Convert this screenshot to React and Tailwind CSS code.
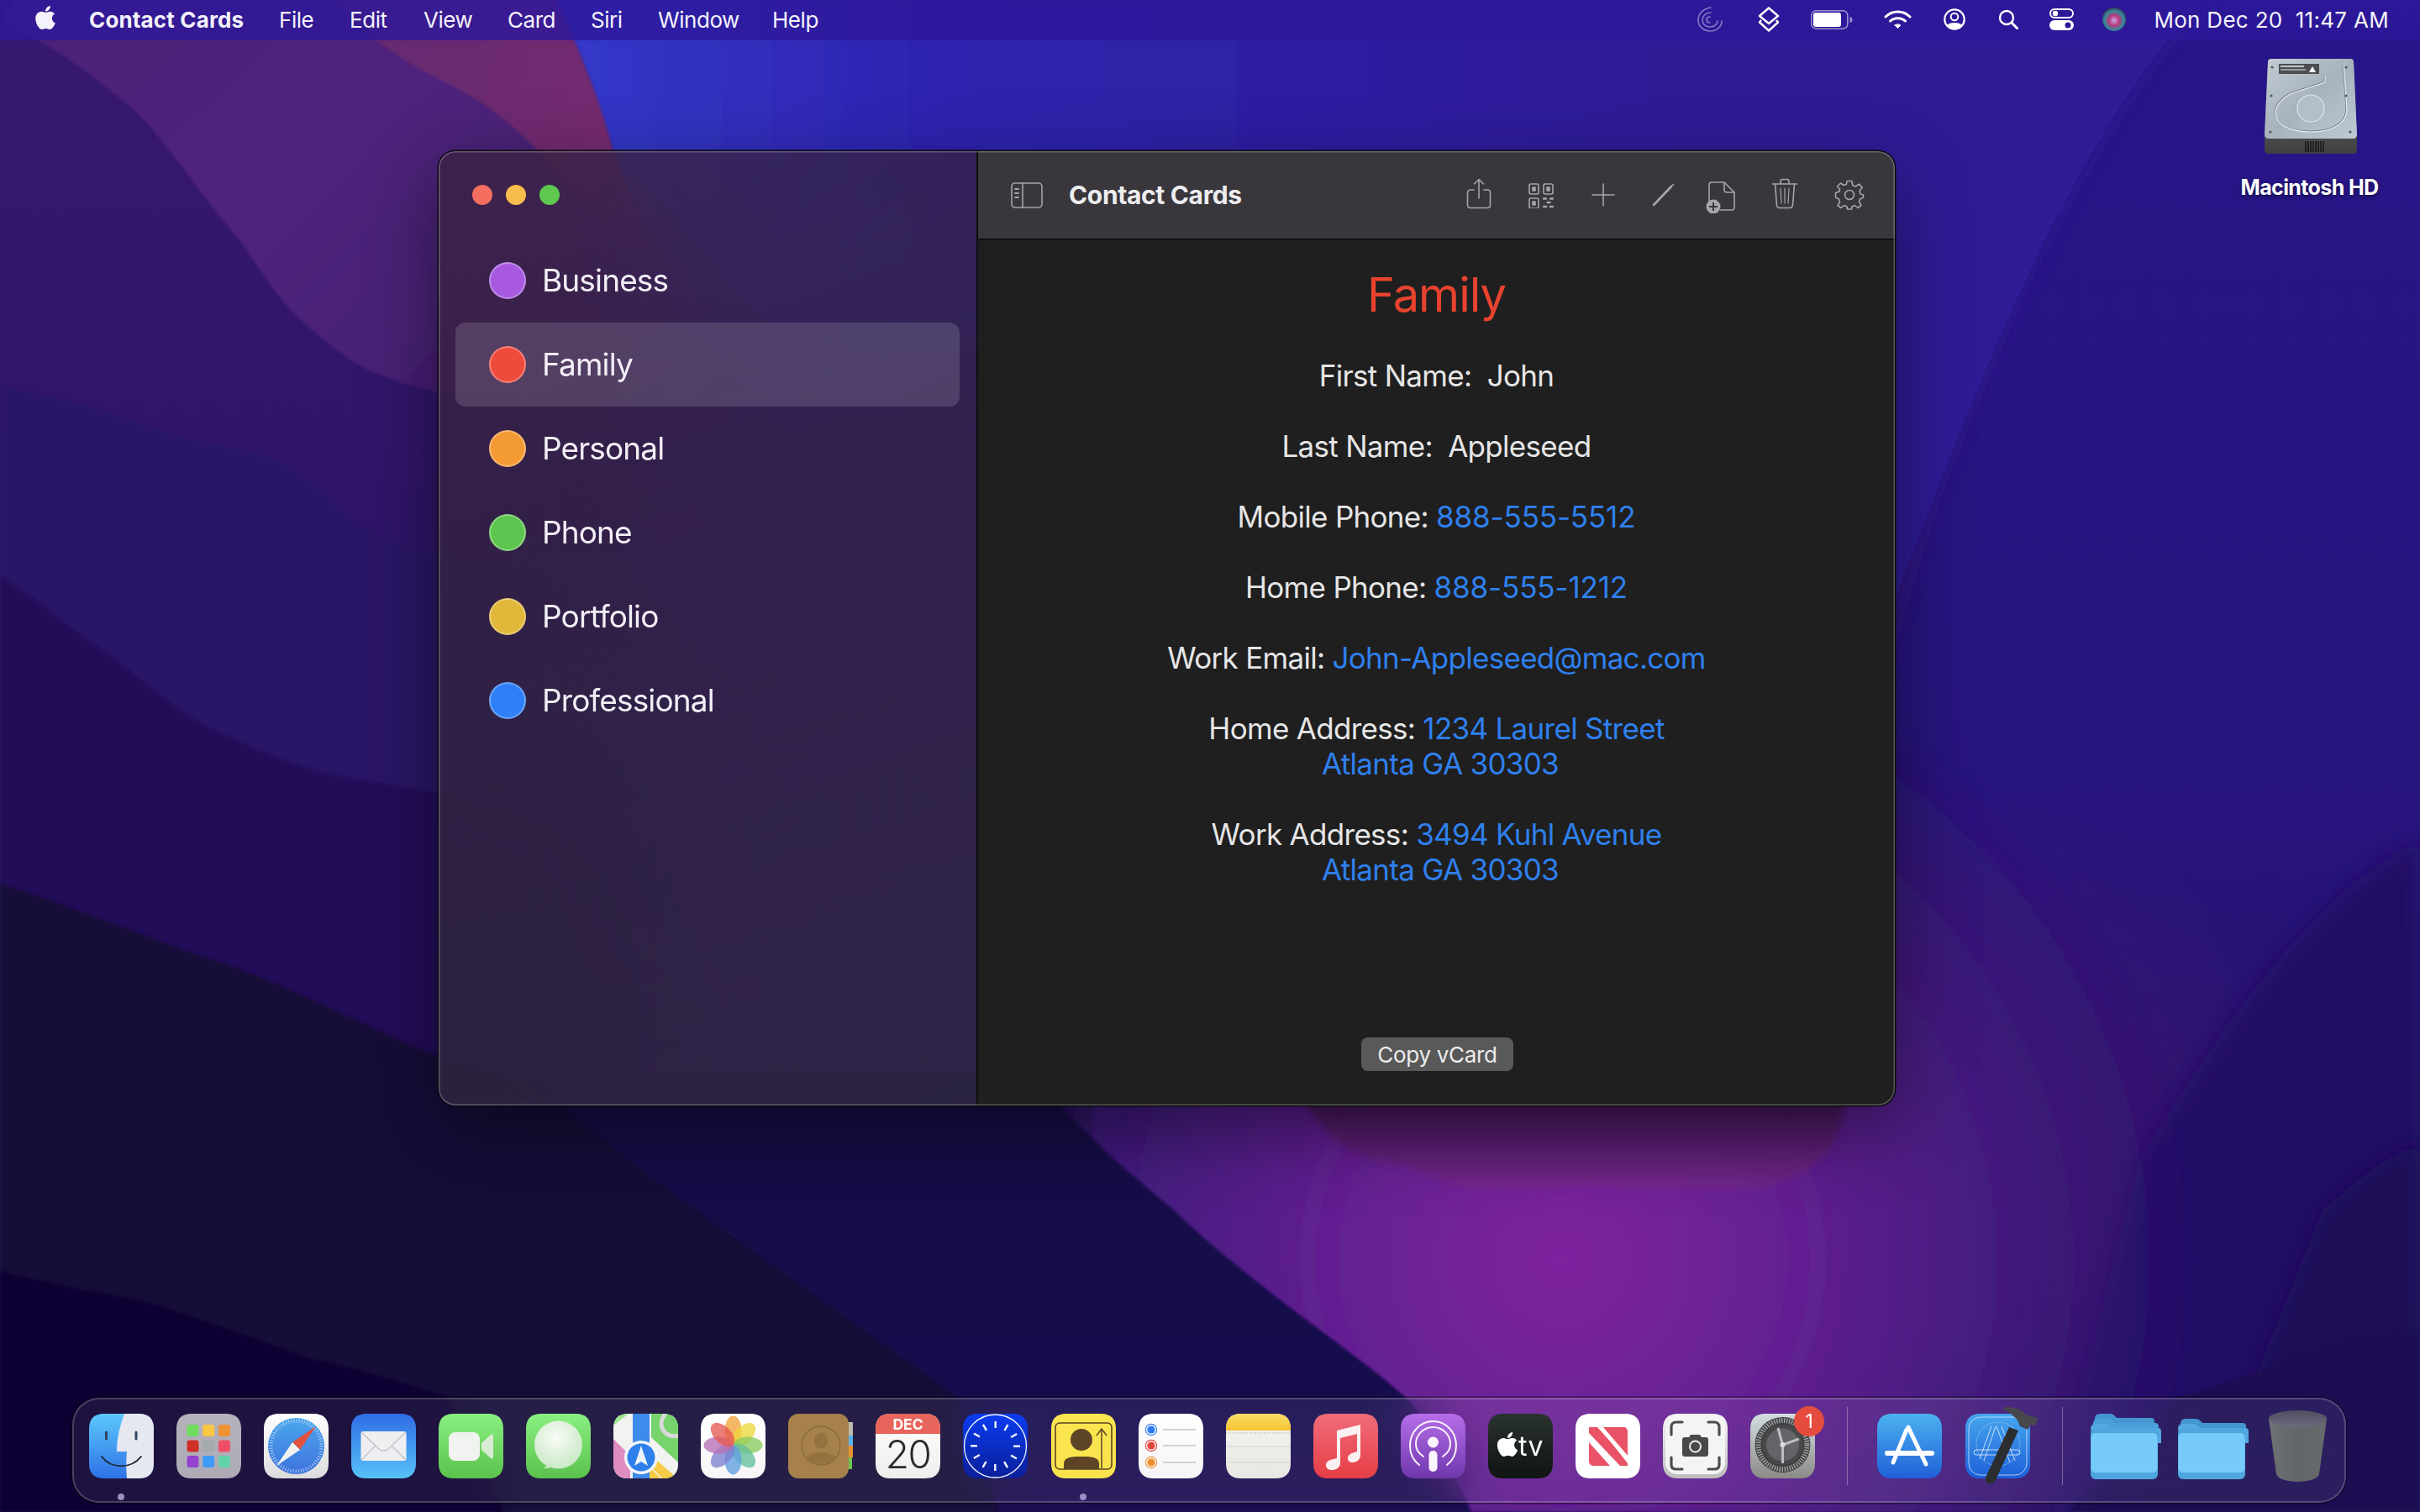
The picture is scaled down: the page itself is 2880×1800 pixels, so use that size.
import React from "react";
import { FaApple } from "react-icons/fa";

function Wallpaper() {
  return (
    <svg className="absolute inset-0 w-full h-full" viewBox="0 0 2880 1800" preserveAspectRatio="none">
      <defs>
        <linearGradient id="wbase" x1="0" y1="0" x2="0" y2="1">
          <stop offset="0" stopColor="#27168a" /><stop offset="0.55" stopColor="#28147c" /><stop offset="0.75" stopColor="#241168" /><stop offset="1" stopColor="#1b0c50" />
        </linearGradient>
        <linearGradient id="wmid" gradientUnits="userSpaceOnUse" x1="0" y1="0" x2="0" y2="1400">
          <stop offset="0" stopColor="#2e1b94" /><stop offset="0.6" stopColor="#31167f" /><stop offset="1" stopColor="#431a7a" />
        </linearGradient>
        <linearGradient id="wblue" gradientUnits="userSpaceOnUse" x1="660" y1="0" x2="2000" y2="0">
          <stop offset="0" stopColor="#3439ca" /><stop offset="0.35" stopColor="#2d22ae" /><stop offset="1" stopColor="#2d1b96" />
        </linearGradient>
        <linearGradient id="wleft" gradientUnits="userSpaceOnUse" x1="0" y1="48" x2="0" y2="700">
          <stop offset="0" stopColor="#371870" /><stop offset="1" stopColor="#2e1468" />
        </linearGradient>
        <linearGradient id="wl1" gradientUnits="userSpaceOnUse" x1="100" y1="50" x2="500" y2="450">
          <stop offset="0" stopColor="#4c2078" /><stop offset="0.5" stopColor="#50247c" /><stop offset="1" stopColor="#461f74" />
        </linearGradient>
        <linearGradient id="wmag" gradientUnits="userSpaceOnUse" x1="450" y1="60" x2="720" y2="140">
          <stop offset="0" stopColor="#652970" /><stop offset="1" stopColor="#742a70" />
        </linearGradient>
        <radialGradient id="wglow" gradientUnits="userSpaceOnUse" cx="1860" cy="1500" r="760">
          <stop offset="0" stopColor="#7e229e" /><stop offset="0.38" stopColor="#611f90" /><stop offset="0.72" stopColor="#3f1a7c" stopOpacity="0.9" /><stop offset="1" stopColor="#2a1270" stopOpacity="0" />
        </radialGradient>
        <linearGradient id="wlobe" gradientUnits="userSpaceOnUse" x1="0" y1="1316" x2="0" y2="1425">
          <stop offset="0" stopColor="#3f1750" /><stop offset="1" stopColor="#7a2890" />
        </linearGradient>
        <radialGradient id="wside" gradientUnits="userSpaceOnUse" cx="2280" cy="1450" r="520">
          <stop offset="0" stopColor="#551c7c" stopOpacity="0.8" /><stop offset="1" stopColor="#551c7c" stopOpacity="0" />
        </radialGradient>
        <linearGradient id="wband" gradientUnits="userSpaceOnUse" x1="0" y1="1316" x2="0" y2="1800">
          <stop offset="0" stopColor="#160945" /><stop offset="1" stopColor="#1a0b52" />
        </linearGradient>
        <filter id="wb1"><feGaussianBlur stdDeviation="1.5" /></filter>
        <filter id="wb2"><feGaussianBlur stdDeviation="12" /></filter>
        <filter id="wb3"><feGaussianBlur stdDeviation="5" /></filter>
      </defs>
      <rect width="2880" height="1800" fill="url(#wbase)" />
      {/* right of the window */}
      <path d="M2620 0 C2510 120 2420 290 2308 576 C2260 720 2200 900 2200 1100 V1500 H600 V0 Z" fill="url(#wmid)" filter="url(#wb2)" />
      <rect x="1700" y="900" width="1180" height="900" fill="url(#wside)" />
      <path d="M2880 1000 C2780 1050 2680 1160 2547 1380 L2440 1800 H2880 Z" fill="#211066" filter="url(#wb2)" />
      <path d="M2880 1361 C2840 1375 2800 1410 2764 1440 L2620 1800 H2880 Z" fill="#1c0d56" filter="url(#wb2)" />
      {/* top left wave */}
      <path d="M0 0 H760 V1400 H0 Z" fill="url(#wleft)" />
      <path d="M0 25 C60 50 110 90 160 131 C200 170 240 235 281 280 C310 320 330 355 357 380 C385 405 410 425 434 438 C470 455 500 462 523 467 L760 480 V0 H15 Z" fill="url(#wl1)" filter="url(#wb1)" />
      <path d="M400 0 C420 30 450 50 480 70 C500 85 540 100 574 123 C600 140 620 160 638 177 C680 230 730 280 800 360 L905 420 C800 300 745 240 730 179 C715 120 690 60 663 0 Z" fill="url(#wmag)" filter="url(#wb1)" />
      {/* top band, in front of the wave's straight edge */}
      <path d="M663 0 C690 60 715 120 730 179 C760 260 800 340 900 420 H2256 V710 L2308 576 C2420 290 2510 120 2620 0 Z" fill="url(#wblue)" filter="url(#wb1)" />
      {/* lower left steps */}
      <path d="M0 460 C80 470 150 500 217 520 C260 530 310 535 344 554 C380 575 410 610 434 629 C460 648 495 655 523 662 L760 700 V1400 H0 Z" fill="#2b1366" filter="url(#wb1)" />
      <path d="M0 687 C50 715 90 755 128 778 C170 810 215 850 255 869 C300 890 340 908 383 919 C430 930 480 938 523 944 L760 1000 V1316 H1300 V1800 H0 Z" fill="#200e58" filter="url(#wb1)" />
      <path d="M0 1052 C90 1080 170 1115 255 1143 C350 1175 440 1225 523 1259 L760 1316 H1300 V1800 H0 Z" fill="#150939" filter="url(#wb1)" />
      <path d="M0 1513 C60 1530 130 1540 184 1553 C250 1575 310 1595 367 1617 C430 1630 490 1650 533 1663 L600 1800 H0Z" fill="#0d0430" filter="url(#wb1)" />
      {/* purple area */}
      <path d="M1100 700 H2880 V1800 H1750 C1720 1730 1690 1680 1671 1663 C1600 1600 1500 1540 1396 1440 C1330 1385 1280 1340 1230 1317 Z" fill="url(#wglow)" filter="url(#wb1)" />
      <path d="M2880 1587 C2760 1600 2680 1640 2590 1663 L2460 1800 H2880 Z" fill="#1c0c52" filter="url(#wb1)" />
      <path d="M1543 1300 C1570 1340 1610 1385 1653 1383 C1690 1390 1730 1420 1781 1417 C1830 1415 1880 1410 1928 1413 C1990 1416 2060 1420 2112 1410 C2150 1400 2180 1375 2190 1340 L2200 1300 Z" fill="url(#wlobe)" opacity="0.85" filter="url(#wb3)" />
      {/* navy band */}
      <path d="M624 1280 C760 1400 1000 1560 1139 1663 L1190 1800 H1750 C1720 1730 1690 1680 1671 1663 C1600 1600 1500 1540 1396 1440 C1330 1385 1280 1340 1230 1280 Z" fill="url(#wband)" filter="url(#wb1)" />
    </svg>
  );
}

const S = "#a6a5a9";

function MenuGlyphs() {
  return (
    <>
      <svg className="w-[32px] h-[32px] opacity-40" viewBox="0 0 32 32" fill="none" stroke="#fff" strokeWidth="1.7" strokeLinecap="round">
        <path d="M17 2 C8 3 2 9 2 17 C2 25 9 30 16 30 C24 30 30 25 30 18" />
        <path d="M17 8 C11 8 7 12 7 17 C7 22 11 25 16 25 C21 25 25 22 25 18" />
        <path d="M16 20 C13 20 12 18 12 16.5 C12 14 14 13 16 13" />
      </svg>
      <svg className="ml-[39px] w-[30px] h-[30px]" viewBox="0 0 30 30" fill="none" stroke="#fff" strokeWidth="2.4" strokeLinejoin="round">
        <path d="M15 1.5 L26 11 L15 20 L4 11 Z" />
        <path d="M6 16 L4 18.5 L15 28.5 L26 18.5 L24 16" />
      </svg>
      <svg className="ml-[35px] w-[50px] h-[23px]" viewBox="0 0 50 23" fill="none">
        <rect x="0.8" y="0.8" width="43" height="21.4" rx="5.5" stroke="#fff" strokeOpacity="0.55" strokeWidth="1.5" />
        <rect x="3" y="3" width="33" height="17" rx="3" fill="#fff" />
        <path d="M46.5 8 C48.5 8.5 49.5 10 49.5 11.5 C49.5 13 48.5 14.5 46.5 15 Z" fill="#fff" fillOpacity="0.55" />
      </svg>
      <svg className="ml-[37px] w-[33px] h-[23px]" viewBox="0 0 33 23" fill="none" stroke="#fff" strokeLinecap="round" strokeWidth="3">
        <path d="M2 8 C10 0 23 0 31 8" />
        <path d="M7.5 13 C12 8.5 21 8.5 25.5 13" />
        <path d="M13 18 L16.5 21.5 L20 18 C18 16.5 15 16.5 13 18Z" fill="#fff" strokeWidth="1" />
      </svg>
      <svg className="ml-[38px] w-[26px] h-[26px]" viewBox="0 0 26 26" fill="none">
        <circle cx="13" cy="13" r="11.7" stroke="#fff" strokeWidth="2.2" />
        <circle cx="13" cy="10" r="4.3" stroke="#fff" strokeWidth="2" />
        <path d="M4 20 C7 16 19 16 22 20 C19 25.5 7 25.5 4 20Z" fill="#fff" />
      </svg>
      <svg className="ml-[39px] w-[24px] h-[24px]" viewBox="0 0 24 24" fill="none" stroke="#fff" strokeWidth="2.4" strokeLinecap="round">
        <circle cx="10" cy="10" r="8" />
        <path d="M16 16 L23 23" strokeWidth="3" />
      </svg>
      <svg className="ml-[37px] w-[29px] h-[26px]" viewBox="0 0 29 26">
        <rect x="1" y="1" width="27" height="10" rx="5" fill="none" stroke="#fff" strokeWidth="2" />
        <circle cx="7" cy="6" r="3.2" fill="#fff" />
        <rect y="14" width="29" height="12" rx="6" fill="#fff" />
        <circle cx="22" cy="20" r="3.5" fill="#2a1898" />
      </svg>
      <svg className="ml-[34px] w-[28px] h-[28px]" viewBox="0 0 28 28">
        <defs>
          <radialGradient id="siri" cx="0.5" cy="0.55" r="0.55">
            <stop offset="0" stopColor="#c8a8e8" /><stop offset="0.4" stopColor="#b8387c" /><stop offset="0.75" stopColor="#2f8c9c" /><stop offset="1" stopColor="#3a3a50" />
          </radialGradient>
        </defs>
        <circle cx="14" cy="14" r="14" fill="url(#siri)" />
      </svg>
    </>
  );
}

function MenuBar() {
  const items = [["File", "w-[84px]"], ["Edit", "w-[88px]"], ["View", "w-[100px]"], ["Card", "w-[99px]"], ["Siri", "w-[80px]"], ["Window", "w-[136px]"], ["Help", "w-[60px]"]];
  return (
    <div className="relative h-[48px] bg-[#2d189a]/80 flex items-center text-[#f4f2fa] text-[26px] tracking-[-0.45px] pl-[39px] pb-[2px]">
      <FaApple className="w-[30px] h-[32px] mb-[5px] mr-[37px]" />
      <span className="font-bold w-[226px] tracking-[0.15px] whitespace-nowrap">Contact Cards</span>
      {items.map(([t, w]) => <span key={t} className={w}>{t}</span>)}
      <div className="ml-auto flex items-center pr-[37px]">
        <MenuGlyphs />
        <span className="ml-[33px] whitespace-pre tracking-[0.3px]">Mon Dec 20  11:47 AM</span>
      </div>
    </div>
  );
}

function HardDisk() {
  return (
    <svg className="w-[110px] h-[113px]" viewBox="0 0 110 113">
      <defs>
        <linearGradient id="hd" x1="0" y1="0" x2="1" y2="1">
          <stop offset="0" stopColor="#c4ccd4" /><stop offset="0.5" stopColor="#a6b2bd" /><stop offset="1" stopColor="#bdcbd4" />
        </linearGradient>
        <linearGradient id="hdb" x1="0" y1="0" x2="0" y2="1">
          <stop offset="0" stopColor="#7a7e80" /><stop offset="1" stopColor="#3e4042" />
        </linearGradient>
      </defs>
      <path d="M8 0 H102 C105 0 106 2 106 4 L110 94 V109 C110 111 108 113 105 113 H5 C2 113 0 111 0 109 V94 L4 4 C4 2 5 0 8 0Z" fill="url(#hdb)" />
      <path d="M8 0 H102 C105 0 106 2 106 4 L110 90 C110 93 108 95 105 95 H5 C2 95 0 93 0 90 L4 4 C4 2 5 0 8 0Z" fill="url(#hd)" />
      <rect x="17" y="6" width="48" height="12" fill="#4c4e52" />
      <rect x="19" y="8" width="28" height="2" fill="#c5c8cc" /><rect x="19" y="12" width="30" height="2" fill="#9a9da0" />
      <path d="M57 9 L61 16 H53 Z" fill="#fff" />
      <path d="M72 20 V28 L30 42 C18 50 13 56 13 65 C13 78 30 87 55 87 C80 87 96 78 98 62 L94 3" fill="none" stroke="#6f7a84" strokeWidth="1.2" transform="translate(-0.8 -0.8)" />
      <path d="M72 20 V28 L30 42 C18 50 13 56 13 65 C13 78 30 87 55 87 C80 87 96 78 98 62 L94 3" fill="none" stroke="#e8edf0" strokeWidth="1.2" />
      <circle cx="55" cy="59" r="16" fill="#b3bfc8" stroke="#dfe5e9" strokeWidth="1.2" />
      <circle cx="9" cy="10" r="1.6" fill="#555" /><circle cx="97" cy="10" r="1.6" fill="#555" /><circle cx="8" cy="44" r="1.6" fill="#555" /><circle cx="97" cy="44" r="1.6" fill="#555" /><circle cx="7" cy="87" r="1.6" fill="#555" /><circle cx="102" cy="87" r="1.6" fill="#555" />
      <g stroke="#1d1e20" strokeWidth="1.8">
        {[0, 1, 2, 3, 4, 5, 6, 7].map((i) => <path key={i} d={`M${49 + i * 3} 98 V111`} />)}
      </g>
    </svg>
  );
}

function ToolIcon({ children, w, h, vb, cls }) {
  return <svg className={cls} width={w} height={h} viewBox={vb || `0 0 ${w} ${h}`} fill="none" stroke={S} strokeWidth="1.6" strokeLinecap="round" strokeLinejoin="round">{children}</svg>;
}

function Toolbar() {
  return (
    <div className="h-[106px] bg-[#39373c] border-b-2 border-[#0e0e0f] flex items-center shrink-0 pl-[39px]">
      <ToolIcon w={38} h={31} cls="mt-[1px]">
        <rect x="1" y="1" width="36" height="29" rx="4" />
        <path d="M14 1 V30" />
        <path d="M5 8 H9 M5 13 H9 M5 18 H9" strokeWidth="1.9" />
      </ToolIcon>
      <span className="ml-[31px] font-bold text-[30px] tracking-[-0.35px] text-[#eeedef] whitespace-nowrap">Contact Cards</span>
      <div className="ml-auto flex items-center pr-[36px] h-full">
        <ToolIcon w={30} h={37} cls="mb-[3px]">
          <path d="M9 14 H5 C3 14 1.5 15 1.5 17 V32 C1.5 34 3 35.5 5 35.5 H25 C27 35.5 28.5 34 28.5 32 V17 C28.5 15 27 14 25 14 H21" />
          <path d="M15 24 V1.5 M9.5 7 L15 1.5 L20.5 7" />
        </ToolIcon>
        <ToolIcon w={30} h={30} cls="ml-[44px] mt-[2px]">
          <rect x="1" y="1" width="11" height="12" rx="2" /><rect x="18" y="1" width="11" height="12" rx="2" /><rect x="1" y="18" width="11" height="12" rx="2" />
          <rect x="5" y="5" width="3" height="4" fill={S} /><rect x="22" y="5" width="3" height="4" fill={S} /><rect x="5" y="22" width="3" height="4" fill={S} />
          <path d="M18 18.5 H21 M26 18.5 H29 M22.5 23 H25.5 M18 28 H21 M26 28 H29" strokeWidth="2.5" />
        </ToolIcon>
        <ToolIcon w={28} h={28} cls="ml-[45px]">
          <path d="M14 1 V27 M1 14 H27" />
        </ToolIcon>
        <ToolIcon w={27} h={28} cls="ml-[44px]">
          <path d="M2 26 L23 4" strokeWidth="2.6" />
          <path d="M23.5 3.5 L25.5 1.5" strokeWidth="1.6" />
        </ToolIcon>
        <svg className="ml-[37px] mt-[5px]" width="35" height="38" viewBox="0 0 35 38" fill="none" stroke={S} strokeWidth="1.6" strokeLinejoin="round">
          <path d="M4 24 V4 C4 2.3 5.3 1 7 1 H22 L34 13 V31 C34 32.7 32.7 34 31 34 H17" />
          <path d="M22 1 V10 C22 12 23 13 25 13 H34" />
          <circle cx="9" cy="30" r="8.5" fill={S} stroke="none" />
          <path d="M9 25 V35 M4 30 H14" stroke="#39373c" strokeWidth="2" />
        </svg>
        <ToolIcon w={32} h={37} cls="ml-[43px] mb-[3px]">
          <path d="M1.5 7 H30.5 M11 7 V4 C11 2.5 12 1.5 13.5 1.5 H18.5 C20 1.5 21 2.5 21 4 V7" />
          <path d="M4.5 7 L6.5 32 C6.7 34.5 8 35.5 10 35.5 H22 C24 35.5 25.3 34.5 25.5 32 L27.5 7" />
          <path d="M11 12 L12 30 M16 12 V30 M21 12 L20 30" strokeWidth="1.2" />
        </ToolIcon>
        <svg className="ml-[43px]" width="36" height="36" viewBox="0 0 36 36" fill="none" stroke={S} strokeWidth="1.6" strokeLinejoin="round">
          <path d="M15.2 1.5 H20.8 L21.8 6.5 L25.2 8 L29.5 5.2 L33.2 9.4 L30 13.3 L31 17 L34.5 18 L34.5 21 L30.5 23 L29.5 26.5 L32 30.5 L28 33.5 L24.5 30.5 L21 32 L20.5 35 H15.5 L15 32 L11.5 30.5 L8 33.5 L4 30.5 L6.5 26.5 L5.5 23 L1.5 21 V15.5 L6 14 L6.5 11 L3.5 8 L7.5 4 L11 6.5 L14.2 5.5 Z" />
          <circle cx="18" cy="18" r="5.5" />
        </svg>
      </div>
    </div>
  );
}

function Row({ color, label, selected }) {
  return (
    <div className={`h-[100px] rounded-[12px] mx-[20px] flex items-center pl-[40px] ${selected ? "bg-white/[0.14]" : ""}`}>
      <span className="w-[44px] h-[44px] rounded-full border-[2.5px] border-white/30 shrink-0" style={{ backgroundColor: color }} />
      <span className="ml-[19px] text-[37px] tracking-[-0.86px] text-[#f1eef5]">{label}</span>
    </div>
  );
}

function Field({ label, children, gap }) {
  return (
    <p className="text-center whitespace-pre text-[35px] tracking-[-0.7px] leading-[42px] text-[#e6e6e6]">
      {label}{gap || " "}{children}
    </p>
  );
}

const B = ({ children }) => <span className="text-[#2f80ee]">{children}</span>;
const N = ({ children }) => <span className="text-[#2f80ee] tracking-[-0.15px]">{children}</span>;

function Window() {
  return (
    <div className="absolute left-[522px] top-[180px] w-[1733px] h-[1136px] rounded-[20px] overflow-hidden flex shadow-[0_0_0_1.5px_#0b0b0d,0_30px_90px_rgba(0,0,0,0.45)]">
      <div className="w-[642px] shrink-0 bg-[linear-gradient(160deg,rgba(56,34,60,0.72),rgba(44,38,62,0.86))] backdrop-blur-[90px] border-r-2 border-[#0e0e10]">
        <div className="h-[104px] flex items-center gap-[16px] pl-[40px]">
          <span className="w-[24px] h-[24px] rounded-full bg-[#f36e5f]" />
          <span className="w-[24px] h-[24px] rounded-full bg-[#f8bd4c]" />
          <span className="w-[24px] h-[24px] rounded-full bg-[#5fc851]" />
        </div>
        <Row color="#a75ae0" label="Business" />
        <Row color="#ef4b3d" label="Family" selected />
        <Row color="#f49a35" label="Personal" />
        <Row color="#5ec650" label="Phone" />
        <Row color="#e2b83a" label="Portfolio" />
        <Row color="#2f80f6" label="Professional" />
      </div>
      <div className="flex-1 flex flex-col bg-[#1f1f1f] min-w-0">
        <Toolbar />
        <div className="flex-1 flex flex-col items-center pt-[31px] pb-[41px]">
          <h1 className="text-[56px] leading-[68px] tracking-[-1px] text-[#e8432f] font-normal">Family</h1>
          <div className="mt-[41px] flex flex-col gap-[42px]">
            <Field label="First Name:" gap="  ">John</Field>
            <Field label="Last Name:" gap="  ">Appleseed</Field>
            <Field label="Mobile Phone:"><N>888-555-5512</N></Field>
            <Field label="Home Phone:"><N>888-555-1212</N></Field>
            <Field label="Work Email:"><B>John-Appleseed@mac.com</B></Field>
            <Field label="Home Address:"><B>1234 Laurel Street{"\n"} Atlanta GA 30303</B></Field>
            <Field label="Work Address:"><B>3494 Kuhl Avenue{"\n"} Atlanta GA 30303</B></Field>
          </div>
          <button className="mt-auto ml-[2px] h-[40px] w-[181px] rounded-[8px] bg-[#595959] text-[26px] tracking-[-0.3px] text-[#ececec]">Copy vCard</button>
        </div>
      </div>
      <div className="absolute inset-0 rounded-[20px] pointer-events-none shadow-[inset_0_0_0_1.5px_rgba(255,255,255,0.25)]" />
    </div>
  );
}

/* ---------- Dock icons, each drawn in a 77×77 box ---------- */
const sq = "M18 0 H59 C71 0 77 6 77 18 V59 C77 71 71 77 59 77 H18 C6 77 0 71 0 59 V18 C0 6 6 0 18 0Z";

function Ico({ id, from, to, children, dir }) {
  return (
    <svg className="w-[77px] h-[77px] shrink-0 overflow-visible" viewBox="0 0 77 77">
      <defs>
        <linearGradient id={id} x1="0" y1="0" x2={dir ? "1" : "0"} y2={dir ? "0" : "1"}>
          <stop offset="0" stopColor={from} /><stop offset="1" stopColor={to} />
        </linearGradient>
        <clipPath id={id + "c"}><path d={sq} /></clipPath>
      </defs>
      <path d={sq} fill={`url(#${id})`} />
      {children}
    </svg>
  );
}

const Finder = () => (
  <Ico id="fi" from="#5cc8fb" to="#2e72e6">
    <g clipPath="url(#fic)">
      <path d="M42 0 C37 14 33 28 33 45 H45 C44 55 44 66 45 77 H77 V0Z" fill="#e5e8ef" />
    </g>
    <path d="M20.5 22 V30 M56 22 V30" stroke="#31445f" strokeWidth="3" strokeLinecap="round" />
    <path d="M15 51 C26 66 50 66 62 51" fill="none" stroke="#1e2a3c" strokeWidth="2" strokeLinecap="round" />
  </Ico>
);

const Launchpad = () => {
  const cs = ["#6fdc5f", "#fbc843", "#ee9233", "#cf3026", "#a3a9ad", "#ee4f66", "#9343cf", "#3f9bf8", "#62d2a8"];
  return (
    <Ico id="lp" from="#b6b2bc" to="#aeaab5">
      {cs.map((c, i) => <rect key={c} x={12.5 + (i % 3) * 18.7} y={13 + Math.floor(i / 3) * 18.5} width="14" height="14" rx="3" fill={c} />)}
    </Ico>
  );
};

const Safari = () => (
  <Ico id="sa" from="#ffffff" to="#dcdcdc">
    <defs>
      <linearGradient id="sab" x1="0" y1="0" x2="0" y2="1"><stop offset="0" stopColor="#4aa6ee" /><stop offset="1" stopColor="#3f73dc" /></linearGradient>
    </defs>
    <circle cx="38.5" cy="38.5" r="33.5" fill="url(#sab)" />
    <circle cx="38.5" cy="38.5" r="30" fill="none" stroke="#dbe9fa" strokeWidth="4" strokeDasharray="0.7 2.44" />
    <path d="M62 15 L34 34 L43 43 Z" fill="#e2513f" />
    <path d="M15 62 L34 34 L43 43 Z" fill="#f2f2f2" />
  </Ico>
);

const Mail = () => (
  <Ico id="ma" from="#2f6de5" to="#57c2f8">
    <rect x="11.5" y="21" width="54" height="35" rx="2.5" fill="#efeff1" />
    <path d="M12 22 L33 42 C36 45 41 45 44 42 L65 22 M12 55 L29 38 M65 55 L48 38" fill="none" stroke="#c3c5ca" strokeWidth="1.5" />
  </Ico>
);

const FaceTime = () => (
  <Ico id="ft" from="#8aef82" to="#5bc24c">
    <rect x="12" y="22" width="37" height="34" rx="8" fill="#f1f3f0" />
    <path d="M51 35 L62 25 C64 24 65 24.5 65 27 V51 C65 53.5 64 54 62 53 L51 43Z" fill="#d8ecd4" />
  </Ico>
);

const Messages = () => (
  <Ico id="ms" from="#8aef82" to="#5bc24c">
    <defs>
      <radialGradient id="msb" cx="0.45" cy="0.35" r="0.75"><stop offset="0" stopColor="#fafcf9" /><stop offset="1" stopColor="#c2e6bd" /></radialGradient>
    </defs>
    <circle cx="38.5" cy="37" r="28.5" fill="url(#msb)" />
    <path d="M25 58 C25 62 23 64 20 65 C25 65.5 31 64 34 61Z" fill="#cdeac8" />
  </Ico>
);

const Maps = () => (
  <Ico id="mp" from="#7ed771" to="#6cc95f">
    <g clipPath="url(#mpc)">
      <path d="M0 0 H77 V77 H0Z" fill="#f2f2f0" />
      <path d="M45 0 H77 V58 L45 28 Z" fill="#77d46c" />
      <path d="M0 0 H18 L0 14 Z" fill="#9ee48c" />
      <path d="M0 30 L20 50 V77 H0Z" fill="#df8cc0" />
      <path d="M42 62 L56 77 H40 Z" fill="#f6cb45" />
      <path d="M58 77 L42 60 L48 52 L77 78Z" fill="#f6cb45" />
      <path d="M23 0 H43 V77 H23Z" fill="#3d8bea" />
      <path d="M62 0 C50 14 62 30 77 26" fill="none" stroke="#d8d8da" strokeWidth="5" />
    </g>
    <circle cx="33" cy="52" r="20" fill="#f3f5f8" />
    <circle cx="33" cy="52" r="16.5" fill="#2f80ec" />
    <path d="M33 38 L41 62 L33 57 L25 62Z" fill="#eef4fb" />
  </Ico>
);

const Photos = () => {
  const cs = ["#f0a33a", "#ecd93c", "#8acc5d", "#64bf9a", "#5d9de0", "#7c7fcf", "#b66fb5", "#e75a52"];
  return (
    <Ico id="ph" from="#ffffff" to="#f6f6f6">
      {cs.map((c, i) => <ellipse key={c} cx="38.5" cy="20" rx="10" ry="17.5" fill={c} fillOpacity="0.78" transform={`rotate(${i * 45} 38.5 37.5)`} />)}
    </Ico>
  );
};

const Contacts = () => (
  <svg className="w-[77px] h-[77px] shrink-0" viewBox="0 0 77 77">
    <rect x="68" y="10" width="9" height="16" fill="#bdb9ac" /><rect x="69" y="26" width="8" height="12" fill="#5ab2ea" /><rect x="69" y="38" width="8" height="14" fill="#e8912f" /><rect x="68" y="52" width="8" height="14" fill="#6cc452" />
    <rect x="0" y="0" width="72" height="77" rx="12" fill="#a6814c" />
    <circle cx="39" cy="38" r="23" fill="none" stroke="#8a6a3b" strokeWidth="1.3" />
    <ellipse cx="39" cy="32" rx="8" ry="9.5" fill="#94723f" />
    <path d="M21 53 C26 44 52 44 57 53 C50 62 28 62 21 53Z" fill="#94723f" />
  </svg>
);

const Calendar = () => (
  <Ico id="ca" from="#ffffff" to="#eeeeec">
    <g clipPath="url(#cac)"><rect width="77" height="24" fill="#e8655b" /></g>
    <text x="38.5" y="19" textAnchor="middle" fontSize="17.5" fontWeight="700" fill="#fff" fontFamily="Inter, sans-serif">DEC</text>
    <text x="38.5" y="65" textAnchor="middle" fontSize="46" fontWeight="300" letterSpacing="-1.5" fill="#2b2b2b" fontFamily="Inter, sans-serif">20</text>
  </Ico>
);

const Clock = () => (
  <Ico id="cl" from="#0b3cf0" to="#0a1f9a">
    <ellipse cx="38.5" cy="38.5" rx="37" ry="37.5" fill="none" stroke="#f2f4ff" strokeWidth="1.3" />
    {Array.from({ length: 12 }).map((_, i) => (
      <rect key={i} x="37.5" y="9" width="2.4" height="8" fill="#f3f5ff" transform={`rotate(${i * 30} 38.5 38.5)`} />
    ))}
  </Ico>
);

const VCard = () => (
  <Ico id="vc" from="#fbe64f" to="#fae24c">
    <rect x="5" y="11" width="67" height="55" rx="5" fill="none" stroke="#5e4427" strokeWidth="1.6" />
    <circle cx="36" cy="31" r="13" fill="#5e4427" />
    <path d="M15 66 V60 C15 52 22 51 36 51 C50 51 57 52 57 60 V66Z" fill="#5e4427" />
    <path d="M60 65 V18 M54 26 L60 18 L66 26" fill="none" stroke="#5e4427" strokeWidth="1.5" />
  </Ico>
);

const Reminders = () => (
  <Ico id="re" from="#ffffff" to="#f5f5f5">
    {[["#2f7cf0", 19], ["#e8423c", 38], ["#ee8f2e", 58]].map(([c, y]) => (
      <g key={c}>
        <circle cx="15" cy={y} r="6.6" fill="none" stroke={c} strokeWidth="1.1" />
        <circle cx="15" cy={y} r="4.6" fill={c} />
        <path d={`M29 ${y} H68`} stroke="#c4c4c4" strokeWidth="1.4" />
      </g>
    ))}
  </Ico>
);

const Notes = () => (
  <Ico id="no" from="#f6f5f2" to="#e8e6e2">
    <defs><linearGradient id="noy" x1="0" y1="0" x2="0" y2="1"><stop offset="0" stopColor="#fbdc66" /><stop offset="1" stopColor="#f4c532" /></linearGradient></defs>
    <g clipPath="url(#noc)"><rect width="77" height="20" fill="url(#noy)" /></g>
    <path d="M0 23 H77" stroke="#bdbdb8" strokeWidth="1.4" strokeDasharray="1 1.5" />
    <path d="M0 39 H77" stroke="#dcdae0" strokeWidth="1.6" />
    <path d="M0 58 H77" stroke="#d4d2ce" strokeWidth="1" />
  </Ico>
);

const Music = () => (
  <Ico id="mu" from="#ee6c7b" to="#e63e45">
    <path d="M28 20 L56 13 V50 C56 54 52 58 47 58 C43 58 41 56 41 53 C41 49 45 47 49 46 L52 45 V24 L32 29 V59 C32 63 28 67 23 67 C18 67 15 65 15 61 C15 57 19 55 24 54 L28 53Z" fill="#fbf0f1" />
  </Ico>
);

const Podcasts = () => (
  <Ico id="po" from="#b66ee8" to="#6f37ac">
    <g fill="none" stroke="#f8f3fc" strokeWidth="2" strokeLinecap="round">
      <path d="M22 61 C13 54 11 46 11 38 C11 22 23 9 38.5 9 C54 9 66 22 66 38 C66 46 64 54 55 61" />
      <path d="M27 51 C21 47 18 42 18 36 C18 25 27 16 38.5 16 C50 16 59 25 59 36 C59 42 56 47 50 51" />
    </g>
    <circle cx="38.5" cy="34" r="6.5" fill="#fbf6fe" />
    <rect x="33.5" y="44" width="10" height="25" rx="5" fill="#fbf6fe" />
  </Ico>
);

const TV = () => (
  <Ico id="tv" from="#293330" to="#101312">
    <foreignObject x="9" y="20" width="28" height="34">
      <div className="text-white"><FaApple className="w-[28px] h-[33px]" /></div>
    </foreignObject>
    <text x="36" y="50" fontSize="32" fill="#fff" fontFamily="Inter, sans-serif" fontWeight="400" letterSpacing="0.5">tv</text>
  </Ico>
);

const News = () => (
  <Ico id="ne" from="#ffffff" to="#ffffff">
    <path d="M16 16 H28 L62 59 V62 C62 62 56 62 53 62 L16 23Z" fill="#ea5367" />
    <path d="M16 29 L45 62 H22 C18 62 16 60 16 56Z" fill="#ea5367" />
    <path d="M33 16 H57 C60 16 62 18 62 21 V50Z" fill="#ea5367" />
    <path d="M16 26 L49 62 H41 L16 34Z M26 16 H32 L62 50 V56Z" fill="#fff" />
  </Ico>
);

const Shot = () => (
  <Ico id="sc" from="#f6f6f6" to="#bdbdbd">
    <rect x="3" y="3" width="71" height="69" rx="14" fill="#f4f4f4" />
    <g fill="none" stroke="#4c4c4e" strokeWidth="3.2" strokeLinecap="round">
      <path d="M10 25 V16 C10 12 12 10 16 10 H23 M54 10 H61 C65 10 67 12 67 16 V25 M10 52 V61 C10 64 12 66 16 66 H23 M54 66 H61 C65 66 67 64 67 61 V52" />
    </g>
    <path d="M23 31 C23 29 24 28 26 28 H31 L33 25 H44 L46 28 H51 C53 28 54 29 54 31 V48 C54 50 53 51 51 51 H26 C24 51 23 50 23 48Z" fill="#49494b" />
    <circle cx="38.5" cy="39" r="6.5" fill="none" stroke="#eee" strokeWidth="2" />
  </Ico>
);

const Prefs = () => (
  <div className="relative w-[77px] h-[77px] shrink-0">
    <Ico id="pr" from="#d4dde2" to="#8b8b87">
      <circle cx="38.5" cy="37" r="33" fill="#3e3f41" />
      <circle cx="38.5" cy="37" r="29" fill="none" stroke="#a3a4a5" strokeWidth="6" strokeDasharray="1.4 1.6" />
      <circle cx="38.5" cy="37" r="24" fill="#48494b" />
      <circle cx="38.5" cy="37" r="19.5" fill="#636467" />
      <path d="M38.5 37 L33 17 M38.5 37 L58 30 M38.5 37 L38.5 59" stroke="#bdbec0" strokeWidth="3" />
      <circle cx="38.5" cy="37" r="3" fill="#dcdcdd" />
    </Ico>
    <span className="absolute -top-[9px] -right-[11px] w-[36px] h-[36px] rounded-full bg-[#e64c3d] text-white text-[23px] leading-[36px] text-center">1</span>
  </div>
);

const AppStore = () => (
  <Ico id="as" from="#4cb2f0" to="#2060d8">
    <g stroke="#fafcff" strokeWidth="5" strokeLinecap="round" fill="none">
      <path d="M35 19 L19 58" />
      <path d="M37 16 L58 60" />
      <path d="M12 47 H65" strokeWidth="6" />
    </g>
  </Ico>
);

const Xcode = () => (
  <Ico id="xc" from="#47a7ef" to="#1d5fd8">
    <rect x="4" y="4" width="69" height="69" rx="14" fill="none" stroke="#cfe4fb" strokeWidth="0.8" />
    <circle cx="39" cy="36" r="26" fill="none" stroke="#8fc2f3" strokeWidth="0.6" />
    <g fill="none" stroke="#d6e8fc" strokeWidth="0.9">
      <path d="M31 15 L17 54 M36 15 L22 56 M37 15 L53 58 M43 15 L59 56" />
      <rect x="10" y="43" width="55" height="6" rx="3" />
    </g>
    <path d="M24 76 L52 16 L63 20 L35 81 C32 86 22 83 24 76Z" fill="#2c2d31" />
    <path d="M43 -7 C55 -10 66 -6 72 1 L86 5 L84 14 L78 13 L74 19 L65 15 L62 8 C58 2 50 -3 43 -7Z" fill="#47484d" />
  </Ico>
);

const Folder = ({ stacks, cls }) => (
  <svg className={`w-[80px] h-[78px] shrink-0 overflow-visible ${cls || ""}`} viewBox="0 0 80 78">
    {stacks.map(([x, y, w, c]) => (
      <path key={y} d={`M${x} ${y + 6} q0 -6 6 -6 h12 q4 0 6 3 l2 2 h${w - 26} q4 0 4 4 v14 h-${w} z`} fill={c} />
    ))}
    <rect x="0" y="17" width="80" height="61" rx="6" fill="#4fa6de" />
    <rect x="0.5" y="23" width="79" height="47" rx="5" fill="#77cbfb" />
  </svg>
);

const Trash = () => (
  <svg className="w-[69px] h-[85px] shrink-0 overflow-visible ml-[1px]" viewBox="0 0 70 86">
    <defs>
      <linearGradient id="tr" x1="0" y1="0" x2="1" y2="0"><stop offset="0" stopColor="#6f7174" /><stop offset="0.5" stopColor="#60666a" /><stop offset="1" stopColor="#666a6c" /></linearGradient>
      <linearGradient id="tr2" x1="0" y1="0" x2="0" y2="1"><stop offset="0" stopColor="#4f4d5e" /><stop offset="1" stopColor="#6e6b80" /></linearGradient>
    </defs>
    <path d="M0 10 L9 76 C10 83 22 86 35 86 C48 86 60 83 61 76 L70 10Z" fill="url(#tr)" />
    <ellipse cx="35" cy="10" rx="35" ry="10" fill="url(#tr2)" />
  </svg>
);

const Dot = () => <span className="absolute left-1/2 -translate-x-1/2 top-[95px] w-[8px] h-[8px] rounded-full bg-[#9a8fc4]" />;
const Sep = ({ cls }) => <span className={`w-[1px] h-[93px] bg-white/30 ml-[11px] shrink-0 ${cls}`} />;

function Dock() {
  return (
    <div className="absolute left-[86px] top-[1664px] w-[2706px] h-[125px] rounded-[32px] bg-white/[0.07] backdrop-blur-[30px] border-2 border-white/20 shadow-[0_0_0_1.5px_rgba(0,0,0,0.45)] flex items-center gap-[27.1px] pl-[17.5px] pb-[10px]">
      <div className="relative"><Finder /><Dot /></div>
      <Launchpad /><Safari /><Mail /><FaceTime /><Messages /><Maps /><Photos /><Contacts /><Calendar /><Clock />
      <div className="relative"><VCard /><Dot /></div>
      <Reminders /><Notes /><Music /><Podcasts /><TV /><News /><Shot /><Prefs />
      <Sep cls="mr-[8px]" />
      <AppStore /><Xcode />
      <Sep cls="mr-[6px]" />
      <Folder stacks={[[5, 0, 67, "#4396d0"], [3, 6, 74, "#4a9fd8"], [0, 12, 80, "#53a9e0"]]} />
      <Folder cls="-ml-[3px]" stacks={[[3, 6, 74, "#4396d0"], [0, 12, 80, "#53a9e0"]]} />
      <Trash />
    </div>
  );
}

export default function App() {
  return (
    <div className="relative w-[2880px] h-[1800px] overflow-hidden font-['Inter',sans-serif]">
      <Wallpaper />
      <MenuBar />
      <div className="absolute left-[2664px] top-[70px] w-[169px] flex flex-col items-center">
        <div className="ml-[3px]"><HardDisk /></div>
        <span className="mt-[22px] text-[25px] font-bold tracking-[-0.6px] text-white whitespace-nowrap [text-shadow:0_2px_4px_rgba(0,0,0,0.5)]">Macintosh HD</span>
      </div>
      <Window />
      <Dock />
    </div>
  );
}
